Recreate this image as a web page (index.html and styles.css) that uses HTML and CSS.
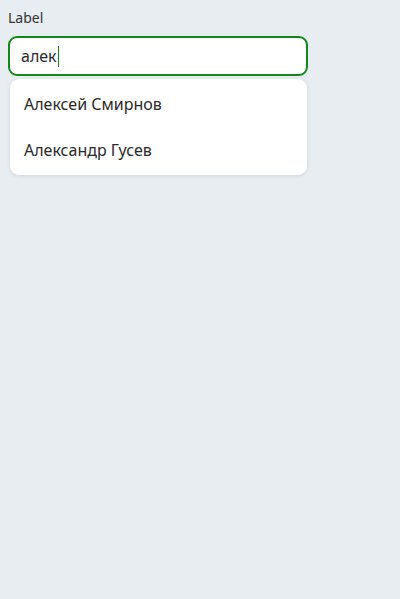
FILE: index.html
```html
<!DOCTYPE html>
<html lang="ru">
<head>
<meta charset="utf-8">
<link rel="stylesheet" href="styles.css">
</head>
<body>
<div class="field">
  <label class="label" for="q">Label</label>
  <div class="input"><span class="value">алек</span><span class="caret"></span></div>
  <ul class="menu">
    <li class="item">Алексей Смирнов</li>
    <li class="item">Александр Гусев</li>
  </ul>
</div>
</body>
</html>
```
FILE: styles.css
```css
html, body { margin: 0; padding: 0; }
body {
  background: #e8edf1;
  font-family: "Noto Sans", sans-serif;
  color: #2a2a2a;
  width: 400px;
  height: 599px;
}
.field {
  width: 300px;
  padding: 9px 0 0 8px;
  display: flex;
  flex-direction: column;
}
.label {
  font-size: 14px;
  line-height: 18px;
  color: #333;
  padding-bottom: 9px;
}
.input {
  box-sizing: border-box;
  height: 40px;
  border: 2px solid #15861a;
  border-radius: 9px;
  background: #fff;
  display: flex;
  align-items: center;
  padding-left: 11px;
  font-size: 16px;
  color: #2a2a2a;
}
.caret {
  display: inline-block;
  width: 1px;
  height: 21px;
  background: #15861a;
  margin-left: 1px;
}
.menu {
  list-style: none;
  margin: 3px 1px 0 2px;
  padding: 2px 0;
  background: #fff;
  border-radius: 9px;
  box-shadow: 0 1px 4px rgba(40, 60, 80, 0.12);
}
.item {
  height: 46px;
  display: flex;
  align-items: center;
  padding-left: 14px;
  font-size: 16px;
  color: #2a2a2a;
}
```
